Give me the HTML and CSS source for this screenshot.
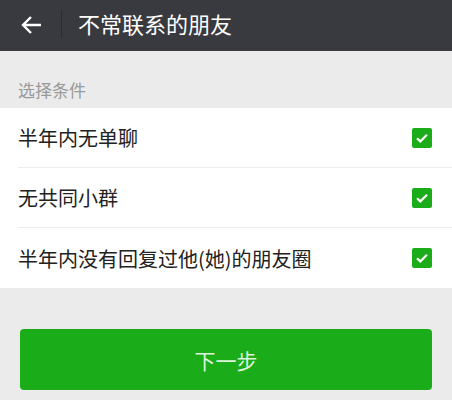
FILE: index.html
```html
<!DOCTYPE html>
<html lang="zh">
<head>
<meta charset="utf-8">
<link rel="stylesheet" href="styles.css">
</head>
<body>
<div class="header">
  <svg class="back" width="22" height="20" viewBox="0 0 22 20"><path d="M21 10H3M11 2L3 10l8 8" fill="none" stroke="#fff" stroke-width="2.4"/></svg>
  <div class="divider"></div>
  <div class="title">不常联系的朋友</div>
</div>
<div class="section-label">选择条件</div>
<div class="list">
  <div class="row"><span>半年内无单聊</span><span class="check"><svg width="20" height="20" viewBox="0 0 20 20"><path d="M5 10.2l3.3 3.2L15 6.8" fill="none" stroke="#fff" stroke-width="2.2"/></svg></span></div>
  <div class="row"><span>无共同小群</span><span class="check"><svg width="20" height="20" viewBox="0 0 20 20"><path d="M5 10.2l3.3 3.2L15 6.8" fill="none" stroke="#fff" stroke-width="2.2"/></svg></span></div>
  <div class="row"><span>半年内没有回复过他(她)的朋友圈</span><span class="check"><svg width="20" height="20" viewBox="0 0 20 20"><path d="M5 10.2l3.3 3.2L15 6.8" fill="none" stroke="#fff" stroke-width="2.2"/></svg></span></div>
</div>
<div class="actions">
  <button class="next">下一步</button>
</div>
</body>
</html>
```
FILE: styles.css
```css
html, body { margin: 0; padding: 0; }
body {
  width: 452px; height: 400px; overflow: hidden;
  background: #ebebeb;
  font-family: "Noto Sans CJK SC", "Noto Sans", sans-serif;
}
.header {
  height: 51px; background: #393a3f;
  display: flex; align-items: center;
}
.back { margin-left: 20px; margin-top: -2px; }
.divider { width: 1px; height: 28px; background: #2b2c30; margin-left: 19px; margin-top: -4px; }
.title { color: #fff; font-size: 22px; margin-left: 16px; line-height: 1; margin-top: -5px; }
.section-label {
  color: #999; font-size: 17px; padding: 0 18px 10px;
  height: 57px; box-sizing: border-box;
  line-height: 1; display: flex; align-items: flex-end;
}
.list { background: #fff; padding-left: 18px; }
.row {
  height: 60px; display: flex; align-items: center; justify-content: space-between;
  padding-right: 20px; font-size: 20px; color: #222;
  border-bottom: 1px solid #ececec; box-sizing: border-box;
}
.row:last-child { border-bottom: none; }
.check { width: 20px; height: 20px; background: #1aad19; border-radius: 2px; display: block; }
.check svg { display: block; }
.actions { padding: 41px 20px 0; }
.next {
  display: block; width: 100%; height: 61px; border: none; border-radius: 4px;
  background: #1aad19; color: #dcf3dc; font-size: 21px;
  font-family: "Noto Sans CJK SC", sans-serif;
}
```
